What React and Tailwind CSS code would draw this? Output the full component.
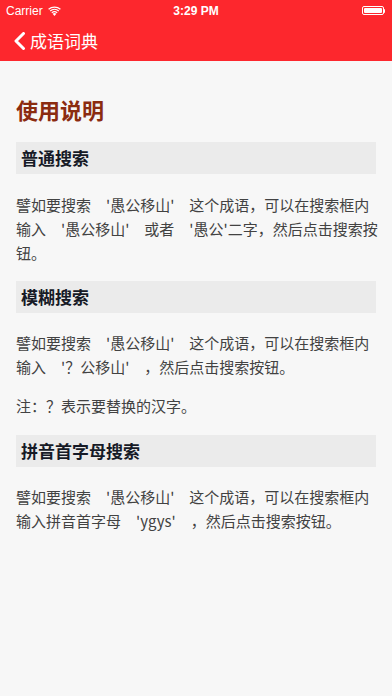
import React from "react";

const font = {
  fontFamily: '"Noto Sans CJK SC", "Liberation Sans", sans-serif',
};

const StatusBar = () => (
  <div className="relative flex h-[21px] items-center px-[6px] text-[12px] text-white">
    <span style={{ fontFamily: '"Liberation Sans", sans-serif' }}>Carrier</span>
    <svg className="ml-[5px]" width="13" height="10" viewBox="0 0 13 10" fill="white">
      <path d="M6.5 10 L4.6 7.8 A3 3 0 0 1 8.4 7.8 Z" />
      <path d="M3.4 6.4 A4.8 4.8 0 0 1 9.6 6.4 L8.8 7.3 A3.6 3.6 0 0 0 4.2 7.3 Z" />
      <path d="M1.8 4.6 A7.2 7.2 0 0 1 11.2 4.6 L10.4 5.5 A6 6 0 0 0 2.6 5.5 Z" />
      <path d="M0.2 2.8 A9.6 9.6 0 0 1 12.8 2.8 L12 3.7 A8.4 8.4 0 0 0 1 3.7 Z" />
    </svg>
    <span
      className="absolute left-1/2 -translate-x-1/2 font-semibold"
      style={{ fontFamily: '"Liberation Sans", sans-serif' }}
    >
      3:29 PM
    </span>
    <div className="ml-auto mr-[1px] flex items-center">
      <div className="h-[9px] w-[22px] rounded-[2px] border border-white p-[1px]">
        <div className="h-full w-full rounded-[1px] bg-white" />
      </div>
      <div className="h-[4px] w-[1.5px] rounded-r bg-white" />
    </div>
  </div>
);

const Heading = ({ children, className = "" }) => (
  <div
    className={`flex h-[32px] items-center bg-[#ebebeb] pl-[5px] text-[17px] font-bold text-[#161a26] ${className}`}
  >
    {children}
  </div>
);

// lines are broken as in the app
const Para = ({ lines, className = "" }) => (
  <p className={`whitespace-nowrap text-[15px] leading-[24px] text-[#424242] ${className}`}>
    {lines.map((l, i) => (
      <React.Fragment key={i}>
        {i > 0 && <br />}
        {l}
      </React.Fragment>
    ))}
  </p>
);

export default function App() {
  return (
    <div className="min-h-[696px] bg-[#f7f7f7]" style={font}>
      <div className="bg-[#fd272d]">
        <StatusBar />
        <div className="flex h-[40px] items-center pl-[13px] text-white">
          <svg width="13" height="18" viewBox="0 0 13 18" fill="none">
            <path d="M10.5 1.5 L3 9 L10.5 16.5" stroke="white" strokeWidth="3" strokeLinecap="round" strokeLinejoin="round" />
          </svg>
          <span className="ml-[4px] text-[17px]">成语词典</span>
        </div>
      </div>

      <div className="px-[16px]">
        <h1 className="mt-[33px] text-[22px] font-bold leading-[30px] text-[#8b2b10]">使用说明</h1>

        <Heading className="mt-[18px]">普通搜索</Heading>
        <Para
          className="mt-[19px]"
          lines={[
            "譬如要搜索　'愚公移山'　这个成语，可以在搜索框内",
            "输入\u2002\u2002'愚公移山'\u2002\u2002或者\u2002\u2002'愚公'二字，然后点击搜索按",
            "钮。",
          ]}
        />

        <Heading className="mt-[16px]">模糊搜索</Heading>
        <Para
          className="mt-[18px]"
          lines={[
            "譬如要搜索　'愚公移山'　这个成语，可以在搜索框内",
            "输入　'？公移山'　，然后点击搜索按钮。",
          ]}
        />
        <Para className="mt-[15px]" lines={["注：？表示要替换的汉字。"]} />

        <Heading className="mt-[17px]">拼音首字母搜索</Heading>
        <Para
          className="mt-[18px]"
          lines={[
            "譬如要搜索　'愚公移山'　这个成语，可以在搜索框内",
            "输入拼音首字母　'ygys'　，然后点击搜索按钮。",
          ]}
        />
      </div>
    </div>
  );
}
